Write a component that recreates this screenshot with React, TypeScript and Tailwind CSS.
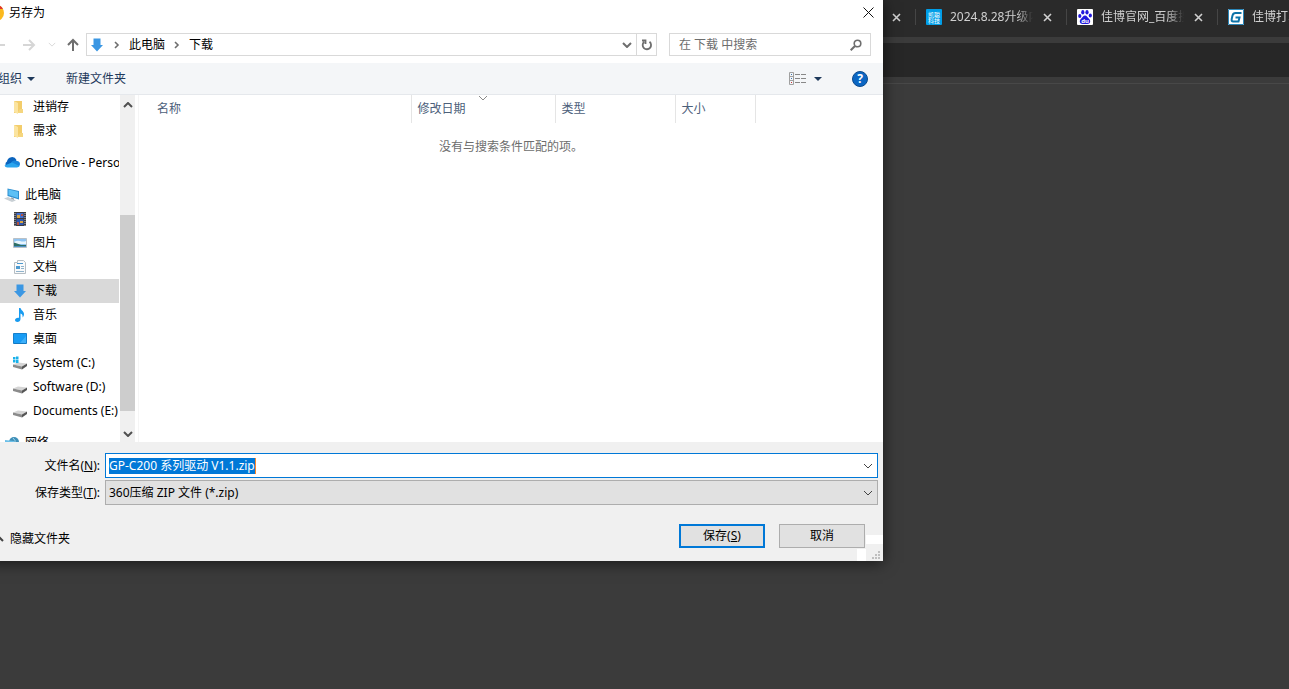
import { useEffect, useRef } from "react";
import type { ReactNode } from "react";

const FONT = "font-['Noto_Sans','Noto_Sans_CJK_SC',sans-serif]";

function Chevron({ className, d = "M1 1l4 4 4-4" }: { className?: string; d?: string }) {
  return (
    <svg width="10" height="6" viewBox="0 0 10 6" className={className} fill="none" stroke="currentColor">
      <path d={d} />
    </svg>
  );
}

function DownloadIcon() {
  return (
    <svg width="16" height="16" viewBox="0 0 16 16" className="shrink-0">
      <path d="M4.500 1.500h7V8H14l-6 6.500L2 8h2.500z" fill="#3b97e3" />
    </svg>
  );
}

function FolderIcon() {
  return (
    <svg width="16" height="16" viewBox="0 0 16 16" className="shrink-0">
      <path d="M2 2h8v12H2z" fill="#f3cd6b" />
      <path d="M2 2l4 2v11l-4-2z" fill="#fbe4a0" />
      <path d="M8 10h3v4H6v-1z" fill="#f5d67f" />
    </svg>
  );
}

function OneDriveIcon() {
  return (
    <svg width="16" height="16" viewBox="0 1 16 16" className="shrink-0">
      <path d="M3 7.500a5 5 0 0 1 9.500-1.500L9 13H3.500a3 3 0 0 1-.5-5.500z" fill="#0a63bd" />
      <path d="M8 7.500a4.500 4.500 0 0 1 5-.5 3.200 3.200 0 0 1 3 3.200 3 3 0 0 1-2.500 2.800H4z" fill="#1a86dc" />
      <path d="M.5 11.500L8 8.500l7.500 3.500a3 3 0 0 1-2.500 1.500H3.500a3 3 0 0 1-3-2z" fill="#2aa5ee" />
    </svg>
  );
}

function ComputerIcon() {
  return (
    <svg width="16" height="16" viewBox="0 0 16 16" className="shrink-0">
      <path d="M3.500 1.500L15 4v8.500L3.500 9z" fill="#2e8fd0" />
      <path d="M4.500 2.500L14 4.800V11L4.500 8z" fill="#5cc0f5" />
      <path d="M7 10.500l3 1v2l-3-1z" fill="#8a969e" />
      <path d="M0 11.500l4-1.500 8 3.500L8 15z" fill="#c9d0d5" />
    </svg>
  );
}

function VideoIcon() {
  return (
    <svg width="16" height="16" viewBox="0 0 16 16" className="shrink-0">
      <path d="M2 1h12v14H2z" fill="#3b3b40" />
      <path d="M4.500 2h7v5h-7z" fill="#3f6fd0" />
      <path d="M4.500 8h7v6h-7z" fill="#2f58b0" />
      <path d="M5 4h3v3H5zM8 10h3v2H8z" fill="#d9a441" />
      <path d="M9 3h2v2H9zM5 11h2v3H5z" fill="#b5523e" />
      <path d="M3 2v13M13 2v13" stroke="#c8c8c8" strokeDasharray="1 1" />
    </svg>
  );
}

function PictureIcon() {
  return (
    <svg width="16" height="16" viewBox="0 0 16 16" className="shrink-0">
      <path d="M1.500 3.500h13v9h-13z" fill="#8fc4f3" stroke="#b9c0c6" />
      <path d="M2 7q3-2 6-1t6 0v3H2z" fill="#e8f5fe" />
      <path d="M2 7.500l3 1 4 1.500h5v1H2z" fill="#2f6f66" />
      <path d="M2 11h12v1H2z" fill="#4c8fc4" />
    </svg>
  );
}

function DocumentIcon() {
  return (
    <svg width="16" height="16" viewBox="0 0 16 16" className="shrink-0" fill="none">
      <path d="M2.500 3.500h3v-2h6l2 2v11h-11z" fill="#fafafa" stroke="#b5bdc3" />
      <path d="M5 4.500h6" stroke="#4d9ad0" />
      <path d="M4 7h4v3H4z" fill="#4d9ad0" />
      <path d="M9 7.500h3M9 9.500h3M4 12.500h8" stroke="#8fb3cc" />
    </svg>
  );
}

function MusicIcon() {
  return (
    <svg width="16" height="16" viewBox="0 0 16 16" className="shrink-0">
      <path d="M7 1h1.500c.5 2.500 3.500 3 3.500 6 0 1.500-.5 2.500-1.500 3.500.5-2.500-.5-3.500-2-4V12c0 2-1.500 3-3 3S3 14.300 3 13c0-1.500 2-2.700 4-2.200z" fill="#189bf0" />
    </svg>
  );
}

function DesktopIcon() {
  return (
    <svg width="16" height="16" viewBox="0 0 16 16" className="shrink-0">
      <path d="M1.500 2.500h13v10h-13z" fill="#189cf5" stroke="#1780cc" />
      <path d="M8 12l6-7v7z" fill="#3db0fa" />
      <path d="M2 12h12v1H2z" fill="#1479c0" />
    </svg>
  );
}

function DriveIcon({ system = false }: { system?: boolean }) {
  return (
    <svg width="16" height="16" viewBox="0 0 16 16" className="shrink-0">
      <path d="M1 9.500l5-2 9 1-5 3z" fill="#d5d5d5" />
      <path d="M1 9.500l9 2v3l-9-2.500z" fill="#8b8b8b" />
      <path d="M10 11.500l5-3v2.500l-5 3.500z" fill="#555" />
      {system && <path d="M1 2h2.500v2.500H1zM4 1.500h2.500v3H4zM1 5h2.500v2.500H1zM4 5h2.500v3H4z" fill="#19b1ea" />}
    </svg>
  );
}

function NetworkIcon() {
  return (
    <svg width="16" height="16" viewBox="0 0 16 16" className="shrink-0">
      <circle cx="10" cy="7" r="5" fill="#3f8fb8" />
      <path d="M1 5l9 1v6l-9-1z" fill="#6bbfe8" />
      <path d="M9 3q3 2 2 6" stroke="#a5dbef" fill="none" />
    </svg>
  );
}

type TreeItem = { label: string; icon: ReactNode; root?: boolean; active?: boolean };

const groups: TreeItem[][] = [
  [
    { label: "进销存", icon: <FolderIcon /> },
    { label: "需求", icon: <FolderIcon /> },
  ],
  [{ label: "OneDrive - Personal", icon: <OneDriveIcon />, root: true }],
  [
    { label: "此电脑", icon: <ComputerIcon />, root: true },
    { label: "视频", icon: <VideoIcon /> },
    { label: "图片", icon: <PictureIcon /> },
    { label: "文档", icon: <DocumentIcon /> },
    { label: "下载", icon: <DownloadIcon />, active: true },
    { label: "音乐", icon: <MusicIcon /> },
    { label: "桌面", icon: <DesktopIcon /> },
    { label: "System (C:)", icon: <DriveIcon system /> },
    { label: "Software (D:)", icon: <DriveIcon /> },
    { label: "Documents (E:)", icon: <DriveIcon /> },
  ],
  [{ label: "网络", icon: <NetworkIcon />, root: true }],
];

function Sidebar() {
  return (
    <nav className="flex w-[147px] shrink-0">
      <div className="flex h-[347px] min-w-0 flex-1 flex-col gap-2 overflow-hidden">
        {groups.map((items, i) => (
          <ul key={i} className="shrink-0">
            {items.map((item) => (
              <li key={item.label}>
                <a
                  href="#"
                  className={`mr-px flex h-6 items-center gap-[5px] overflow-hidden whitespace-nowrap ${
                    item.root ? "pl-4" : "pl-6"
                  } ${item.active ? "bg-[#d9d9d9]" : ""}`}
                >
                  {item.icon}
                  {item.label}
                </a>
              </li>
            ))}
          </ul>
        ))}
      </div>
      <div className="flex w-[15px] flex-col items-center bg-[#f0f0f0] text-[#505050]">
        <Chevron className="my-[7px] shrink-0 stroke-2" d="M1 5l4-4 4 4" />
        <div className="h-[100px]" />
        <div className="w-full flex-1 bg-[#cdcdcd]" />
        <Chevron className="mt-5 mb-[5px] shrink-0 stroke-2" />
      </div>
    </nav>
  );
}

function FileList() {
  return (
    <div className="ml-[3px] min-w-0 flex-1 border-l border-[#f5f5f5]">
      <table className="w-full table-fixed text-left">
        <thead className="text-[#4c607a]">
          <tr className="h-7">
            <th className="w-[272px] border-r border-[#e5e5e5] pl-[18px] font-normal">名称</th>
            <th className="relative w-36 border-r border-[#e5e5e5] pl-1.5 font-normal">
              修改日期
              <Chevron className="absolute top-0 left-[66px] text-[#8a8a8a]" />
            </th>
            <th className="w-[120px] border-r border-[#e5e5e5] pl-1.5 font-normal">类型</th>
            <th className="w-20 border-r border-[#e5e5e5] pl-1.5 font-normal">大小</th>
            <td />
          </tr>
        </thead>
        <tbody>
          <tr>
            <td colSpan={5} className="pt-4 text-center text-[#6d6d6d]">
              没有与搜索条件匹配的项。
            </td>
          </tr>
        </tbody>
      </table>
    </div>
  );
}

function AddressBar() {
  return (
    <div className="flex items-center gap-3 pt-1.5 pr-3 pb-[7px]">
      <div className="flex flex-1 items-center">
        <button aria-label="后退" className="text-[#d6d6d6]">
          <svg width="18" height="16" viewBox="0 0 18 16" fill="none" stroke="currentColor" strokeWidth="2">
            <path d="M17 8H5M10 3L5 8l5 5" />
          </svg>
        </button>
        <button aria-label="前进" className="ml-3.5 text-[#d6d6d6]">
          <svg width="16" height="16" viewBox="0 0 16 16" fill="none" stroke="currentColor" strokeWidth="2">
            <path d="M3 8h11M9 3l5 5-5 5" />
          </svg>
        </button>
        <button aria-label="最近位置" className="ml-3 text-[#d0d0d0]">
          <Chevron className="h-[5px] w-2" />
        </button>
        <button aria-label="上移" className="ml-[9px] text-[#6e6e6e]">
          <svg width="16" height="16" viewBox="0 0 16 16" fill="none" stroke="currentColor" strokeWidth="2">
            <path d="M8 14V3M3 8l5-5 5 5" />
          </svg>
        </button>
        <div className="ml-[5px] flex h-[23px] flex-1 items-center border border-[#d9d9d9] pl-0.5">
          <DownloadIcon />
          <Crumb />
          <a href="#">此电脑</a>
          <Crumb />
          <a href="#">下载</a>
          <button aria-label="以前的位置" className="mr-1 ml-auto text-[#6e6e6e]">
            <Chevron className="stroke-2" />
          </button>
          <button
            aria-label="刷新"
            className="flex h-full w-5 items-center justify-center border-l border-[#d9d9d9] text-[#6e6e6e]"
          >
            <svg width="12" height="12" viewBox="0 0 12 12" fill="none" stroke="currentColor" strokeWidth="1.800">
              <path d="M8.500 2.800A4.200 4.200 0 1 1 3 3M1 1.500h3.500V5" />
            </svg>
          </button>
        </div>
      </div>
      <label className="flex h-[23px] w-[202px] items-center border border-[#d9d9d9] pr-2 pl-[9px]">
        <input
          aria-label="搜索"
          placeholder="在 下载 中搜索"
          className="min-w-0 flex-1 outline-none placeholder:text-[#6d6d6d]"
        />
        <svg width="12" height="12" viewBox="0 0 12 12" fill="none" stroke="#6e6e6e">
          <circle cx="7.500" cy="4.500" r="3.300" strokeWidth="1.600" />
          <path d="M5 7L.7 11.300" strokeWidth="2" />
        </svg>
      </label>
    </div>
  );
}

function Crumb() {
  return (
    <svg width="6" height="8" viewBox="0 0 6 8" className="mx-[9px]" fill="none" stroke="#6e6e6e" strokeWidth="1.600">
      <path d="M1 1l3 3-3 3" />
    </svg>
  );
}

function Toolbar() {
  return (
    <div className="flex h-8 items-center border-b border-[#e5e8ec] bg-[#f4f6f8] pr-[15px] pl-2.5 text-[#1e395b]">
      <button className="flex items-center gap-[5px]">
        组织
        <Triangle />
      </button>
      <button className="ml-[31px]">新建文件夹</button>
      <button aria-label="更改视图" className="ml-auto">
        <svg width="17" height="13" viewBox="0 0 17 13" fill="none" stroke="#a0a0a0">
          <path d="M.5.5h4v12h-4zM.5 4.500h4M.5 8.500h4" />
          <path d="M6 2.500h11M6 6.500h11M6 10.500h11" stroke="#888" strokeDasharray="5 1" />
          <path d="M2 2.500h1M2 6.500h1" stroke="#3c78b4" />
          <path d="M2 10.500h1" stroke="#c33" />
        </svg>
      </button>
      <button aria-label="更多选项" className="ml-2">
        <Triangle />
      </button>
      <button
        aria-label="帮助"
        className="ml-[30px] flex size-4 items-center justify-center rounded-full border border-[#0b4a8c] bg-[#0b66c3] text-xs font-bold text-white"
      >
        ?
      </button>
    </div>
  );
}

function Triangle() {
  return (
    <svg width="8" height="4" viewBox="0 0 8 4" fill="#1e395b">
      <path d="M0 0h8L4 4z" />
    </svg>
  );
}

function SaveForm() {
  const nameRef = useRef<HTMLInputElement>(null);

  useEffect(() => {
    nameRef.current?.focus();
    nameRef.current?.select();
  }, []);

  return (
    <form className="bg-[#f0f0f0] pt-[11px]">
      <div className="flex items-center gap-[5px] pr-[5px]">
        <label htmlFor="name" className="w-28 text-right">
          文件名(<u>N</u>):
        </label>
        <div className="flex h-[25px] flex-1 items-center border border-[#0078d7] bg-white pr-1 pl-[3px]">
          <input
            id="name"
            ref={nameRef}
            defaultValue="GP-C200 系列驱动 V1.1.zip"
            className="field-sizing-content max-w-full border-r border-[#ff8728] outline-none selection:bg-[#0078d7] selection:text-white"
          />
          <Chevron className="ml-auto shrink-0 text-[#444]" />
        </div>
      </div>
      <div className="mt-0.5 flex items-center gap-[5px] pr-[5px]">
        <label htmlFor="type" className="w-28 text-right">
          保存类型(<u>T</u>):
        </label>
        <div className="relative flex h-[25px] flex-1 items-center">
          <select id="type" className="h-full w-full appearance-none border border-[#adadad] bg-[#e1e1e1] pl-[3px]">
            <option>360压缩 ZIP 文件 (*.zip)</option>
          </select>
          <Chevron className="pointer-events-none absolute right-[5px] text-[#444]" />
        </div>
      </div>
      <div className="relative flex h-14 items-start justify-between pt-[19px] pr-[18px] pl-1.5">
        <button type="button" className="mt-[7px] flex items-center gap-1.5">
          <Chevron className="stroke-2 text-[#444]" d="M1 5l4-4 4 4" />
          隐藏文件夹
        </button>
        <div className="flex gap-3.5">
          <button type="button" className="h-6 w-[86px] border-2 border-[#0078d7] bg-[#e1e1e1]">
            保存(<u>S</u>)
          </button>
          <button type="button" className="h-6 w-[86px] border border-[#adadad] bg-[#e1e1e1]">
            取消
          </button>
        </div>
        <span className="absolute right-0 bottom-[17px] h-[9px] w-[17px] bg-white" />
        <span className="absolute right-[17px] bottom-0 h-3 w-[9px] bg-white" />
        <svg width="8" height="8" viewBox="0 0 8 8" className="absolute right-[3px] bottom-0.5" fill="#bfbfbf">
          <path d="M6 0h2v2H6zM3 3h2v2H3zM6 3h2v2H6zM0 6h2v2H0zM3 6h2v2H3zM6 6h2v2H6z" />
        </svg>
      </div>
    </form>
  );
}

function SaveDialog() {
  return (
    <section
      aria-label="另存为"
      className="absolute top-0 -left-3 w-[895px] bg-white shadow-[0_2px_14px_rgba(0,0,0,0.6)]"
    >
      <header className="flex h-[27px] items-center gap-[5px] pr-[9px] pb-0.5">
        <svg width="16" height="16" viewBox="0 0 16 16">
          <circle cx="8" cy="8" r="8" fill="#fbb91e" />
          <path d="M1 4a8 8 0 0 1 14 0z" fill="#e0392b" />
          <circle cx="8" cy="8" r="3" fill="#3b7de0" />
        </svg>
        <h1>另存为</h1>
        <button aria-label="关闭" className="ml-auto">
          <svg width="11" height="11" viewBox="0 0 11 11" stroke="#111">
            <path d="M.5.5l10 10M10.500.5l-10 10" />
          </svg>
        </button>
      </header>
      <AddressBar />
      <Toolbar />
      <div className="flex">
        <Sidebar />
        <FileList />
      </div>
      <SaveForm />
    </section>
  );
}

const tabs = [
  {
    title: "2024.8.28升级内容",
    icon: (
      <svg width="16" height="16" viewBox="0 0 16 16" className="shrink-0">
        <rect width="16" height="16" rx="1" fill="#009ee8" />
        <text x="8" y="7.500" fontSize="6" fill="#fff" textAnchor="middle">凯聪</text>
        <text x="8" y="13.500" fontSize="6" fill="#fff" textAnchor="middle">科技</text>
      </svg>
    ),
  },
  {
    title: "佳博官网_百度搜索",
    icon: (
      <svg width="16" height="16" viewBox="0 0 16 16" className="shrink-0">
        <rect width="16" height="16" rx="1" fill="#fff" />
        <g fill="#2319dc">
          <ellipse cx="2.800" cy="7" rx="1.600" ry="2" />
          <ellipse cx="5.800" cy="3.300" rx="1.600" ry="2.200" />
          <ellipse cx="10" cy="3.300" rx="1.600" ry="2.200" />
          <ellipse cx="13.300" cy="6.500" rx="1.600" ry="2" />
          <path d="M8 6.500c2 0 2.500 2 4 3.300 2 1.700 1.500 5.200-1.500 5.200h-5c-3 0-3.500-3.500-1.500-5.200C5.500 8.500 6 6.500 8 6.500z" />
        </g>
        <text x="8" y="14" fontSize="6" fontWeight="bold" fill="#fff" textAnchor="middle">du</text>
      </svg>
    ),
  },
  {
    title: "佳博打印机",
    icon: (
      <svg width="16" height="16" viewBox="0 0 16 16" fill="none" className="shrink-0">
        <rect width="16" height="16" fill="#fff" />
        <path d="M.5.5h15v15H.5z" stroke="#2a86b8" />
        <path d="M13.500 4H7.500Q5.200 4 4.500 6.500L3.700 10q-.5 2.500 1.500 2.500h5.300l1-4H7.500" stroke="#0d73a8" strokeWidth="2" />
      </svg>
    ),
  },
];

function CloseTab() {
  return (
    <button aria-label="关闭标签页" className="mr-3.5 ml-2.5 shrink-0">
      <svg width="9" height="9" viewBox="0 0 9 9" stroke="#d0d0d0" strokeWidth="1.600">
        <path d="M1 1l7 7M8 1L1 8" />
      </svg>
    </button>
  );
}

function Browser() {
  return (
    <div className="min-h-screen bg-[#3b3b3b]">
      <div className="flex h-[37px] items-center overflow-hidden bg-[#2a2a2a] pb-[3px] pl-[882px] text-[#d0d0d0]">
        <CloseTab />
        {tabs.map((tab) => (
          <div key={tab.title} className="flex w-[151px] shrink-0 items-center">
            <span className="mr-2.5 h-4 w-px bg-[#454545]" />
            {tab.icon}
            <span className="ml-2 min-w-0 flex-1 overflow-hidden mask-r-from-80% whitespace-nowrap">{tab.title}</span>
            <CloseTab />
          </div>
        ))}
      </div>
      <div className="mt-1.5 h-[34px] bg-[#272727]" />
      <div className="mt-1.5 border-t border-[#484848]" />
    </div>
  );
}

export default function App() {
  return (
    <main className={`relative min-h-screen overflow-hidden text-xs text-black ${FONT}`}>
      <Browser />
      <SaveDialog />
    </main>
  );
}
